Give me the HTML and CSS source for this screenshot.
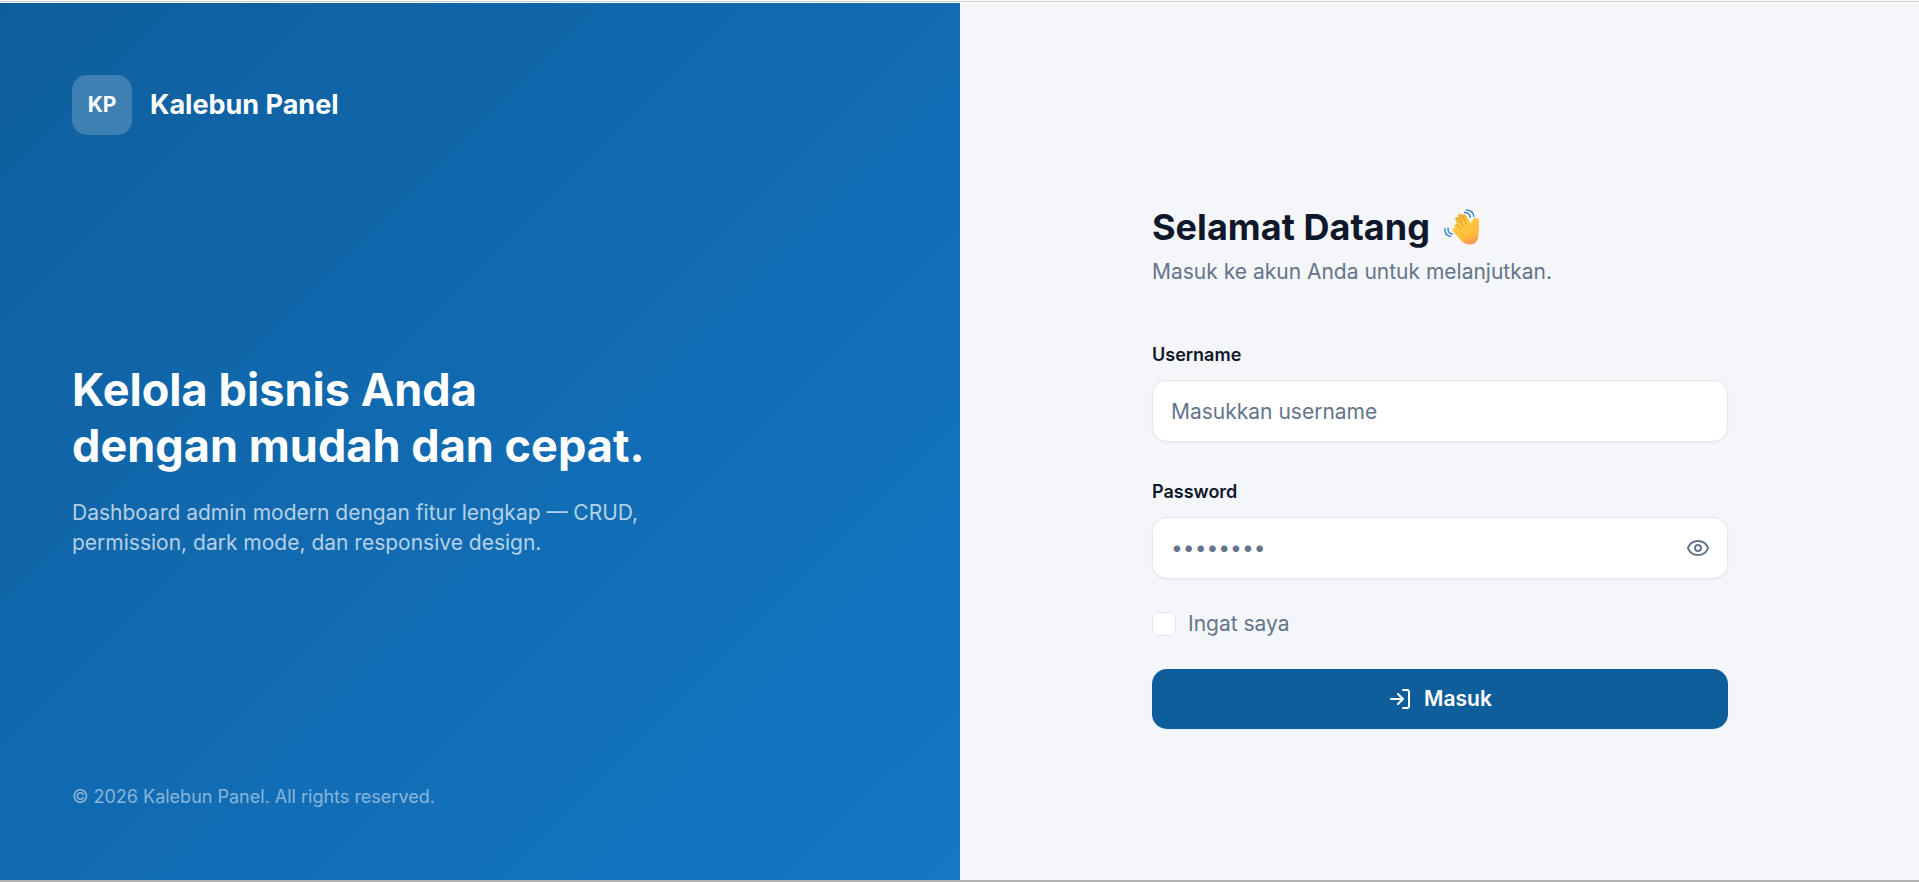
FILE: index.html
```html
<!DOCTYPE html>
<html lang="id">
<head>
<meta charset="utf-8">
<title>Kalebun Panel</title>
<link rel="stylesheet" href="styles.css">
</head>
<body>
<div class="topline"></div>
<main class="page">
  <section class="hero">
    <div class="brand">
      <div class="brand-mark">KP</div>
      <div class="brand-name">Kalebun Panel</div>
    </div>
    <div class="pitch">
      <h2 class="pitch-title">Kelola bisnis Anda<br>dengan mudah dan cepat.</h2>
      <p class="pitch-text">Dashboard admin modern dengan fitur lengkap — CRUD, permission, dark mode, dan responsive design.</p>
    </div>
    <p class="copyright">© 2026 Kalebun Panel. All rights reserved.</p>
  </section>
  <section class="login">
    <form class="form">
      <h1 class="title"><span>Selamat Datang</span>
        <svg class="wave" viewBox="0 0 36 36" aria-hidden="true">
          <defs>
            <linearGradient id="skin" x1=".1" y1="0" x2=".5" y2="1">
              <stop offset="0" stop-color="#e9a92f"/><stop offset=".4" stop-color="#ffc83d"/><stop offset=".82" stop-color="#ffbb3c"/><stop offset="1" stop-color="#f79a52"/>
            </linearGradient>
          </defs>
          <path fill="url(#skin)" d="M10.6 17.2C9.7 15.6 12 14.1 13.2 15.4L11.3 10.6C10.4 8.4 13.1 7 14.4 8.8L15 9.8L14.2 7.2C13.6 4.9 16.4 3.9 17.7 5.8L18.4 6.9C18.2 4.9 20.6 4.3 21.7 6L26.8 14.2L28.6 11.5C29.3 9.3 31.3 8.6 33 9.2C35 9.9 35.5 11.1 35.1 13L34.6 24.4C34.5 31.2 31.7 35.3 25.8 35.5C20.4 35.6 17.6 32.4 14.7 28.8L8.8 22.1C7.3 20.3 9.2 18.2 11.3 19.2Z"/>
          <g fill="none" stroke="#c98418" stroke-width=".9" stroke-linecap="round" opacity=".7">
            <path d="M13.2 15.4L16.5 20M14.6 9.2L19.2 17.4M18.2 6.6L22.5 14.8"/>
          </g>
          <g fill="none" stroke="#1478bd" stroke-width="1.25" stroke-linecap="round">
            <path d="M20.7 3.4C23.6 3.7 25.8 5.4 26.3 8.3M22.4 .8C26.6 1.2 29.4 3.6 29.9 7.3M4.1 19.2C3.5 22.5 5.5 24.5 8.3 25.2M.9 19.5C.5 23.8 2.5 26.6 6.3 27.4"/>
          </g>
        </svg>
      </h1>
      <p class="subtitle">Masuk ke akun Anda untuk melanjutkan.</p>
      <label class="label" for="username">Username</label>
      <input class="input" id="username" type="text" placeholder="Masukkan username">
      <label class="label" for="password">Password</label>
      <div class="input password">
        <input class="bare" id="password" type="password" placeholder="••••••••">
        <svg class="icon eye" viewBox="0 0 24 24"><path d="M2.062 12.348a1 1 0 0 1 0-.696 10.75 10.75 0 0 1 19.876 0 1 1 0 0 1 0 .696 10.75 10.75 0 0 1-19.876 0"/><circle cx="12" cy="12" r="3"/></svg>
      </div>
      <div class="remember"><span class="box"></span><span>Ingat saya</span></div>
      <button class="submit" type="button">
        <svg class="icon" viewBox="0 0 24 24"><path d="M15 3h4a2 2 0 0 1 2 2v14a2 2 0 0 1-2 2h-4"/><path d="m10 17 5-5-5-5"/><path d="M15 12H3"/></svg>
        <span>Masuk</span>
      </button>
    </form>
  </section>
</main>
</body>
</html>
```
FILE: styles.css
```css
* { box-sizing: border-box; }
body {
  margin: 0;
  height: 882px;
  display: flex;
  flex-direction: column;
  overflow: hidden;
  background: #f4f6fa;
  border-bottom: 2px solid #b1b1b1;
  font-family: Inter, "Liberation Sans", sans-serif;
  font-size: 21px;
  line-height: 30px;
  color: #0f172a;
}
h1, h2, p { margin: 0; }
.topline { height: 3px; background: #fff; border-top: 1px solid #fff; flex: none; }
.topline::before { content: ""; display: block; height: 1px; background: #c9cacb; }
.page { flex: 1; display: grid; grid-template-columns: 960px 1fr; }
.hero {
  display: flex;
  flex-direction: column;
  justify-content: space-between;
  padding: 72px 72px 71px;
  color: #fff;
  background: linear-gradient(135deg, #0f5e9c 0%, #116bb2 50%, #1478c5 100%);
}
.brand { display: flex; align-items: center; gap: 18px; }
.brand-mark {
  width: 60px;
  height: 60px;
  border-radius: 15px;
  background: rgba(255, 255, 255, .2);
  display: grid;
  place-items: center;
  font-weight: 700;
}
.brand-name { font-size: 27px; font-weight: 700; }
.pitch-title { font-size: 45px; line-height: 56.25px; font-weight: 700; letter-spacing: .001em; }
.pitch-text { width: 576px; margin-top: 24px; color: rgba(255, 255, 255, .7); }
.copyright { font-size: 18px; line-height: 24px; color: rgba(255, 255, 255, .5); }
.login { display: flex; justify-content: center; padding: 200px 0 0 1px; }
.form { width: 576px; display: flex; flex-direction: column; }
.title { display: flex; align-items: center; gap: 14px; font-size: 36px; line-height: 48px; font-weight: 700; letter-spacing: .001em; }
.wave { width: 36px; height: 36px; }
.subtitle { margin: 6px 0 53px; color: #64748b; }
.label { font-size: 18px; line-height: 30px; font-weight: 600; margin-bottom: 10px; }
.input {
  height: 62px;
  border: 1px solid #e2e8f0;
  border-radius: 15px;
  background: #fff;
  padding: 0 18px;
  margin-bottom: 35px;
  font: inherit;
  color: inherit;
  box-shadow: 0 1px 3px rgba(15, 23, 42, .05);
}
.input::placeholder, .bare::placeholder { color: #64748b; opacity: 1; }
.password { display: flex; align-items: center; margin-bottom: 30px; padding-right: 17px; }
.bare { flex: 1; border: 0; padding: 0; background: none; font: inherit; outline: none; }
.icon { width: 24px; height: 24px; fill: none; stroke: currentColor; stroke-width: 2; stroke-linecap: round; stroke-linejoin: round; }
.eye { color: #64748b; }
.remember { display: flex; align-items: center; gap: 12px; color: #64748b; margin-bottom: 30px; }
.box { width: 24px; height: 24px; border: 1px solid #e2e8f0; border-radius: 6px; background: #fff; }
.submit {
  height: 60px;
  border: 0;
  border-radius: 15px;
  background: #0f5e9c;
  color: #fff;
  font: inherit;
  font-weight: 600;
  display: flex;
  align-items: center;
  justify-content: center;
  gap: 12px;
  box-shadow: 0 1px 3px rgba(15, 23, 42, .05);
}
```
